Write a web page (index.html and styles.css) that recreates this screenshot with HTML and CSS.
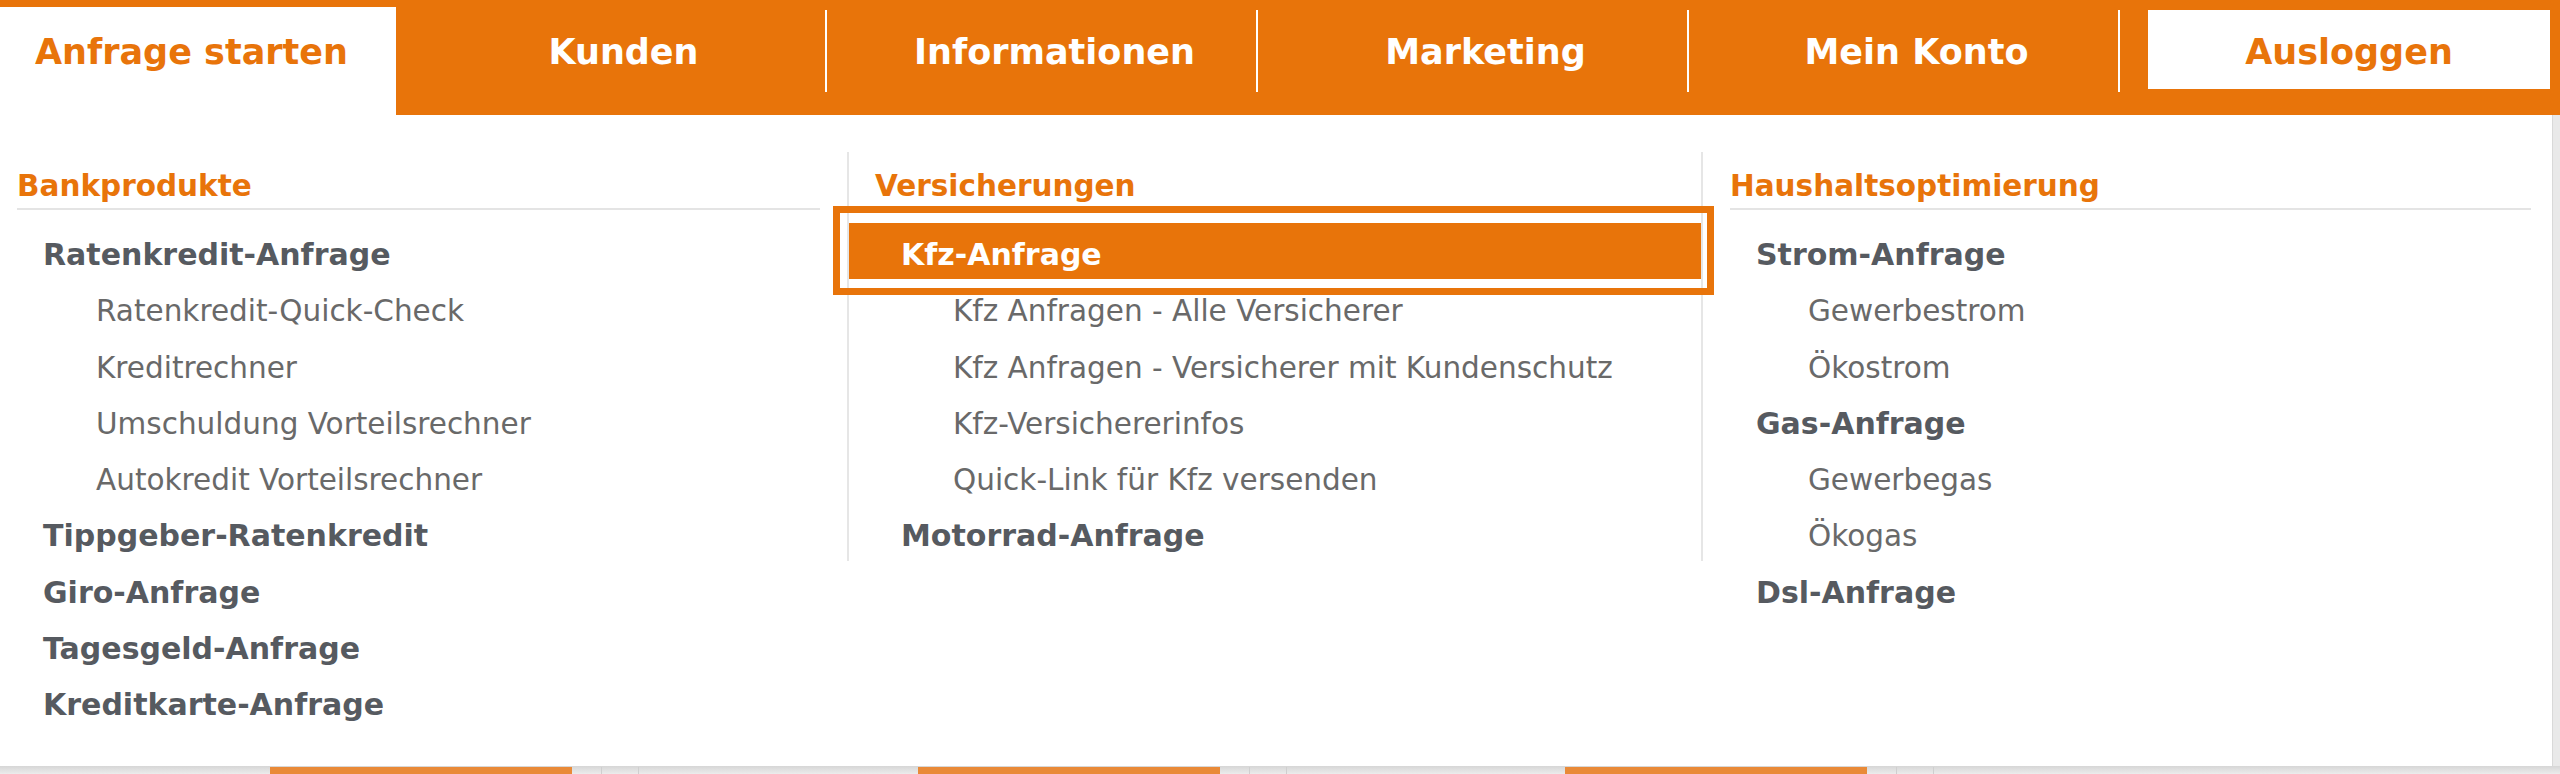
FILE: index.html
```html
<!DOCTYPE html>
<html lang="de">
<head>
<meta charset="utf-8">
<title>Anfrage starten</title>
<link rel="stylesheet" href="styles.css">
</head>
<body>
<header class="topnav">
  <a class="tab tab--active" href="#">Anfrage starten</a>
  <a class="tab" href="#">Kunden</a>
  <a class="tab" href="#">Informationen</a>
  <a class="tab" href="#">Marketing</a>
  <a class="tab" href="#">Mein Konto</a>
  <a class="tab tab--logout" href="#">Ausloggen</a>
</header>
<main class="panel">
  <div class="menu-grid">
    <section class="col col--first">
      <h3 class="col-title">Bankprodukte</h3>
      <ul class="links">
        <li><a class="link link--main" href="#">Ratenkredit-Anfrage</a></li>
        <li><a class="link link--sub" href="#">Ratenkredit-Quick-Check</a></li>
        <li><a class="link link--sub" href="#">Kreditrechner</a></li>
        <li><a class="link link--sub" href="#">Umschuldung Vorteilsrechner</a></li>
        <li><a class="link link--sub" href="#">Autokredit Vorteilsrechner</a></li>
        <li><a class="link link--main" href="#">Tippgeber-Ratenkredit</a></li>
        <li><a class="link link--main" href="#">Giro-Anfrage</a></li>
        <li><a class="link link--main" href="#">Tagesgeld-Anfrage</a></li>
        <li><a class="link link--main" href="#">Kreditkarte-Anfrage</a></li>
      </ul>
    </section>
    <section class="col col--mid">
      <h3 class="col-title">Versicherungen</h3>
      <ul class="links">
        <li><a class="link link--main link--hover" href="#">Kfz-Anfrage</a></li>
        <li><a class="link link--sub" href="#">Kfz Anfragen - Alle Versicherer</a></li>
        <li><a class="link link--sub" href="#">Kfz Anfragen - Versicherer mit Kundenschutz</a></li>
        <li><a class="link link--sub" href="#">Kfz-Versichererinfos</a></li>
        <li><a class="link link--sub" href="#">Quick-Link für Kfz versenden</a></li>
        <li><a class="link link--main" href="#">Motorrad-Anfrage</a></li>
      </ul>
    </section>
    <section class="col col--last">
      <h3 class="col-title">Haushaltsoptimierung</h3>
      <ul class="links">
        <li><a class="link link--main" href="#">Strom-Anfrage</a></li>
        <li><a class="link link--sub" href="#">Gewerbestrom</a></li>
        <li><a class="link link--sub" href="#">Ökostrom</a></li>
        <li><a class="link link--main" href="#">Gas-Anfrage</a></li>
        <li><a class="link link--sub" href="#">Gewerbegas</a></li>
        <li><a class="link link--sub" href="#">Ökogas</a></li>
        <li><a class="link link--main" href="#">Dsl-Anfrage</a></li>
      </ul>
    </section>
  </div>
</main>
<footer class="under">
  <div class="under-group"><span class="under-btn"></span><span class="under-line"></span><span class="under-line"></span></div>
  <div class="under-group"><span class="under-btn"></span><span class="under-line"></span><span class="under-line"></span></div>
  <div class="under-group"><span class="under-btn"></span><span class="under-line"></span><span class="under-line"></span></div>
</footer>
</body>
</html>
```
FILE: styles.css
```css
* { box-sizing: border-box; }

html, body {
  margin: 0;
  padding: 0;
}

body {
  width: 2560px;
  height: 774px;
  overflow: hidden;
  background: #e9e9e9;
  font-family: "DejaVu Sans", Verdana, sans-serif;
}

a { text-decoration: none; }

/* ---------- top navigation ---------- */
.topnav {
  display: flex;
  align-items: flex-start;
  height: 115px;
  padding-top: 7px;
  background: #e8740a;
}

.tab {
  flex: 0 0 431px;
  height: 82px;
  margin-top: 3px;
  padding-left: 26px;
  border-right: 2px solid #ffffff;
  color: #ffffff;
  font-size: 35px;
  font-weight: bold;
  line-height: 84px;
  text-align: center;
  white-space: nowrap;
}

.tab--active {
  flex: 0 0 396px;
  height: 108px;
  margin-top: 0;
  padding-left: 35px;
  border-right: 0;
  background: #ffffff;
  color: #e8740a;
  line-height: 90px;
  text-align: left;
}

.tab--logout {
  flex: 0 0 402px;
  height: 79px;
  margin-left: 28px;
  padding-left: 0;
  border-right: 0;
  background: #ffffff;
  color: #e8740a;
}

/* ---------- dropdown panel ---------- */
.panel {
  width: 2553px;
  height: 651px;
  padding-top: 37px;
  background: #ffffff;
  border-right: 1px solid #d9d9d9;
}

.menu-grid {
  display: grid;
  grid-template-columns: 847px 856px 1fr;
  align-items: start;
}

.col--mid {
  border-left: 2px solid #e6e6e6;
  border-right: 2px solid #e6e6e6;
}

.col-title {
  margin: 0 26px;
  padding: 14px 0 2px;
  border-bottom: 2px solid #e4e4e4;
  color: #e8740a;
  font-size: 29.5px;
  font-weight: bold;
  line-height: 40px;
  white-space: nowrap;
}

.col--first .col-title { margin: 0 27px 0 17px; }
.col--last .col-title { margin: 0 21px 0 27px; }

.links {
  list-style: none;
  margin: 13px 0 0;
  padding: 0;
}

.link {
  display: block;
  position: relative;
  height: 56.25px;
  padding-top: 8px;
  line-height: 48px;
  white-space: nowrap;
}

.link--main {
  padding-left: 52px;
  color: #565a60;
  font-size: 30px;
  font-weight: bold;
}

.link--sub {
  padding-left: 104px;
  color: #696969;
  font-size: 29.5px;
}

.col--first .link--main { padding-left: 43px; }
.col--first .link--sub { padding-left: 96px; }
.col--last .link--main { padding-left: 53px; }
.col--last .link--sub { padding-left: 105px; }

.link--hover {
  background: #e8740a;
  color: #ffffff;
}

/* annotation frame drawn around the hovered entry */
.link--hover::after {
  content: "";
  position: absolute;
  top: -17px;
  right: -13px;
  bottom: -16px;
  left: -16px;
  border: 7px solid #e8740a;
}

/* ---------- page underneath ---------- */
.under {
  display: flex;
  height: 8px;
  padding-left: 270px;
  background: linear-gradient(#d6d6d6, #ececec);
}

.under-group {
  display: flex;
  flex: 0 0 647.5px;
  padding-top: 1px;
}

.under-btn {
  width: 302px;
  background: #e98a38;
}

.under-line {
  width: 1px;
  margin-left: 29px;
  background: #cfcfcf;
}

.under-line + .under-line { margin-left: 36px; }
```
